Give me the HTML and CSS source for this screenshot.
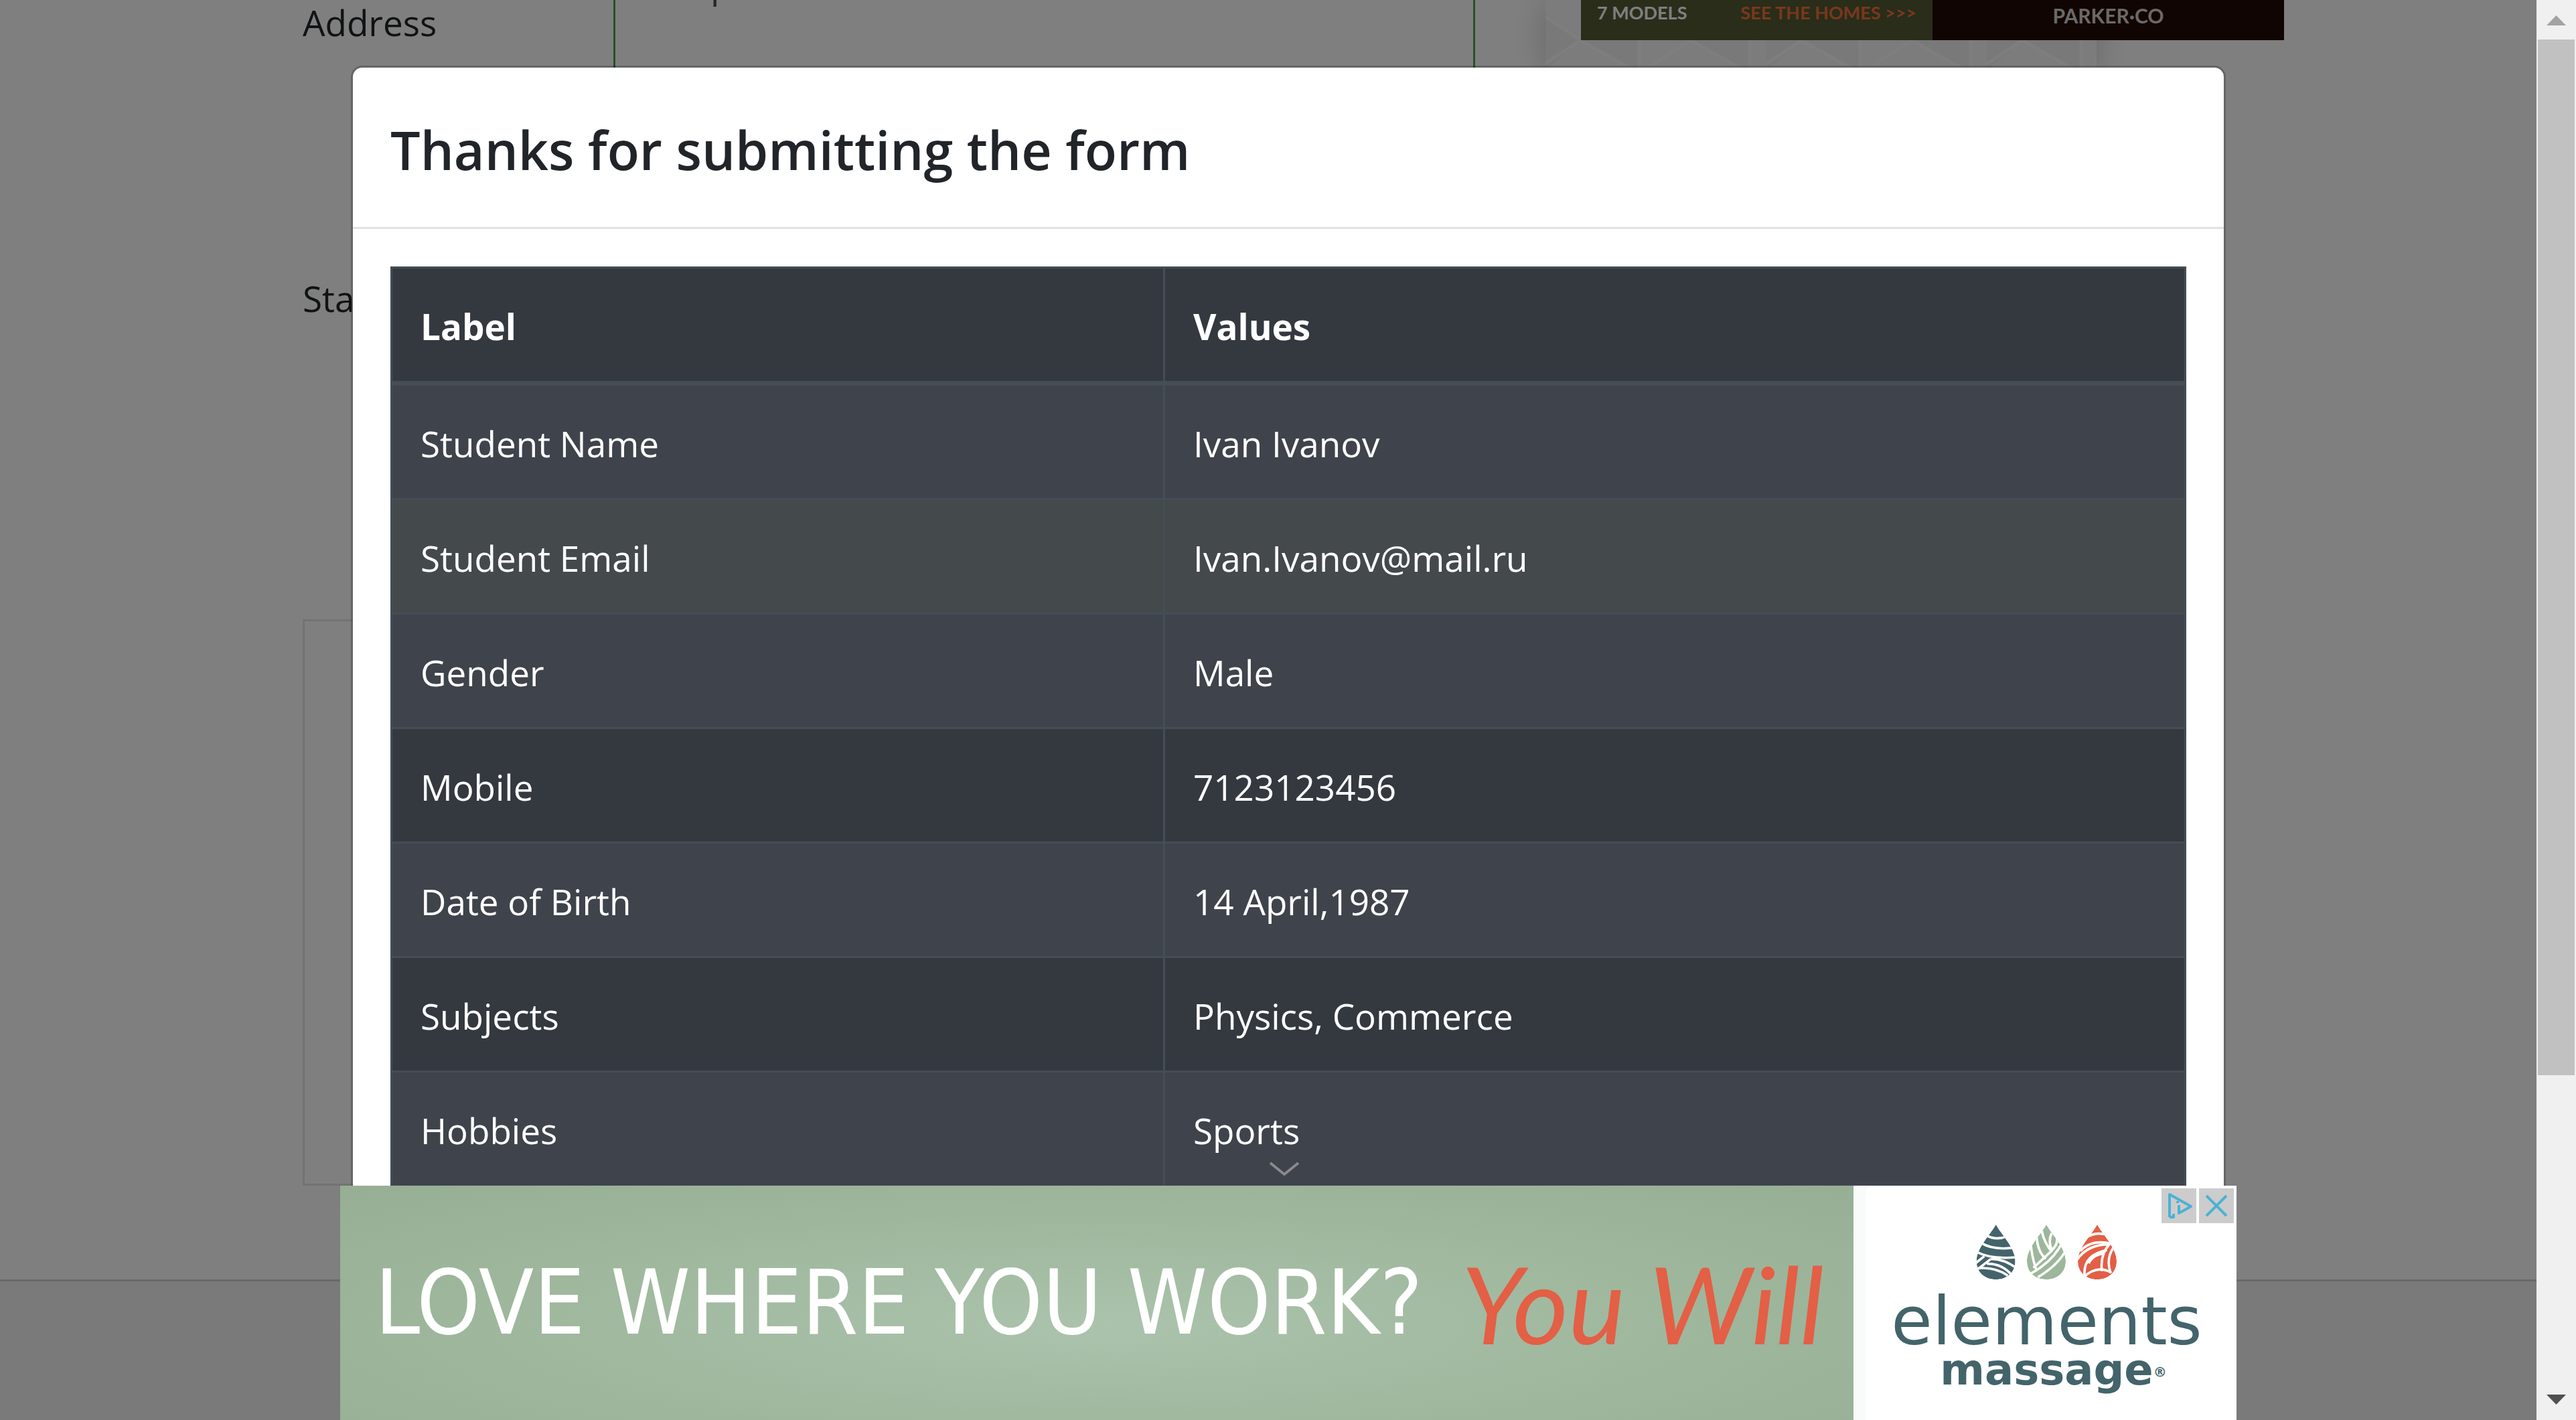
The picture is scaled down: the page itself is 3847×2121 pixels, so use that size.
FILE: index.html
```html
<!DOCTYPE html>
<html lang="en">
<head>
<meta charset="utf-8">
<title>Practice Form</title>
<link rel="stylesheet" href="styles.css">
</head>
<body>
<div class="window">
  <div class="page">
    <main class="content">
      <form class="form">
        <label class="label label-address" for="address">Address</label>
        <textarea class="address" id="address">p</textarea>
        <span class="label label-state">State</span>
        <div class="frame"></div>
      </form>
      <aside class="aside">
        <svg class="pattern" viewBox="0 0 823 110" preserveAspectRatio="none" aria-hidden="true">
          <defs>
            <pattern id="tri" width="330" height="110" patternUnits="userSpaceOnUse">
              <rect width="330" height="110" fill="#f8f8f8"/>
              <path d="M52 60H140V110L52 60ZM0 20L52 60L0 105ZM217 60H305V110L217 60Z" fill="#f2f2f2"/>
              <path d="M0 25L52 60L-15 105M52 60L140 110M217 60L140 110M217 60L305 110M140 60V110M305 60V110" fill="none" stroke="#fdfdfd" stroke-width="5"/>
            </pattern>
          </defs>
          <rect width="823" height="110" fill="url(#tri)"/>
        </svg>
        <div class="homes">
          <div class="homes-left">
            <span>7 MODELS</span>
            <a class="homes-link" href="#">SEE THE HOMES &gt;&gt;&gt;</a>
          </div>
          <div class="homes-right">PARKER·CO</div>
        </div>
      </aside>
    </main>
    <footer class="footer"></footer>
    <div class="backdrop"></div>
  </div>
  <div class="scrollbar" aria-hidden="true">
    <div class="scroll-end"><svg width="29" height="15" viewBox="0 0 29 15"><path d="M14.500 0L29 15H0Z" fill="#a3a3a3"/></svg></div>
    <div class="track"><div class="thumb"></div></div>
    <div class="scroll-end scroll-down"><svg width="29" height="15" viewBox="0 0 29 15"><path d="M0 0H29L14.500 15Z" fill="#505050"/></svg></div>
  </div>
</div>

<div class="overlay">
  <section class="modal" role="dialog" aria-labelledby="modal-title">
    <header class="modal-header"><h1 class="modal-title" id="modal-title">Thanks for submitting the form</h1></header>
    <div class="modal-body">
      <table class="table">
        <thead><tr><th>Label</th><th>Values</th></tr></thead>
        <tbody>
          <tr><td>Student Name</td><td>Ivan Ivanov</td></tr>
          <tr class="hovered"><td>Student Email</td><td>Ivan.Ivanov@mail.ru</td></tr>
          <tr><td>Gender</td><td>Male</td></tr>
          <tr><td>Mobile</td><td>7123123456</td></tr>
          <tr><td>Date of Birth</td><td>14 April,1987</td></tr>
          <tr><td>Subjects</td><td>Physics, Commerce</td></tr>
          <tr><td>Hobbies</td><td>Sports</td></tr>
        </tbody>
      </table>
    </div>
  </section>
</div>

<div class="anchor">
  <svg class="chevron" viewBox="0 0 46 22" aria-hidden="true"><path d="M2 2L23 19L44 2" fill="none" stroke="#8a8a8a" stroke-width="4"/></svg>
  <div class="banner">
    <a class="banner-link" href="#">
      <span class="slogan">LOVE WHERE YOU WORK?</span>
      <span class="script">You Will</span>
    </a>
    <div class="brand">
      <svg class="drops" viewBox="60 170 639 261" aria-hidden="true">
        <defs>
          <path id="drop" d="M0 176C20 215 87 280 87 340C87 390 50 422 0 422C-50 422 -87 390 -87 340C-87 280 -20 215 0 176Z"/>
          <clipPath id="c1"><use href="#drop" x="152"/></clipPath>
          <clipPath id="c2"><use href="#drop" x="378"/></clipPath>
          <clipPath id="c3"><use href="#drop" x="606"/></clipPath>
        </defs>
        <g fill="none" stroke="#fff" stroke-width="11">
          <g clip-path="url(#c1)">
            <use href="#drop" x="152" fill="#43646a" stroke="none"/>
            <path d="M105 222Q150 250 205 228M85 258Q140 292 230 280M60 296Q130 335 250 322M60 350L100 318M60 385L130 330M112 352Q180 350 225 405M130 330Q190 330 250 375M70 372Q150 365 205 405"/>
          </g>
          <g clip-path="url(#c2)">
            <use href="#drop" x="378" fill="#9cb79a" stroke="none"/>
            <path d="M358 205Q365 250 403 300M335 235Q340 300 375 330M308 265Q315 330 335 385M402 215Q385 250 402 290M425 240Q430 265 402 292M310 395Q410 340 450 255M340 412Q430 360 470 285M320 370L395 300"/>
          </g>
          <g clip-path="url(#c3)">
            <use href="#drop" x="606" fill="#e35f45" stroke="none"/>
            <path d="M560 232Q600 208 650 222M530 295Q580 240 670 262M515 335Q560 265 665 264M552 425Q530 315 650 290M568 350Q585 312 640 305M627 385Q618 310 660 265M665 390Q645 330 678 280M545 412Q605 355 670 392"/>
          </g>
        </g>
      </svg>
      <span class="brand-name">elements</span>
      <span class="brand-sub">massage<sup class="reg">®</sup></span>
      <div class="ad-controls">
        <button class="ad-button" type="button" aria-label="Ad information"><svg viewBox="0 0 52 52"><path d="M12 43V9L44 27L26 37V25M12 43H18V38M24 19V22" fill="none" stroke="#4db1d4" stroke-width="4" stroke-linejoin="round"/></svg></button>
        <button class="ad-button" type="button" aria-label="Close ad"><svg viewBox="0 0 52 52"><path d="M11 11L41 41M41 11L11 41" fill="none" stroke="#4db1d4" stroke-width="4"/></svg></button>
      </div>
    </div>
  </div>
</div>
</body>
</html>
```
FILE: styles.css
```css
* { box-sizing: border-box; }

body {
  margin: 0;
  position: relative;
  height: 100vh;
  overflow: hidden;
  font-family: "Open Sans", "Noto Sans", sans-serif;
  font-size: 53px;
  line-height: 84px;
  color: #212529;
}

/* page behind the dialog */
.window {
  display: grid;
  grid-template-columns: minmax(0, 1fr) 59px;
  height: 100%;
}
.page {
  position: relative;
  display: flex;
  flex-direction: column;
  overflow: hidden;
  background: #fff;
}
.content {
  display: grid;
  grid-template-columns: 1751px 1fr;
  column-gap: 105px;
  padding: 0 0 140px 452px;
}
.form {
  display: grid;
  grid-template-columns: 464px 1fr;
  grid-template-rows: 404px 521px 846px;
}
.label-address { margin-top: -8px; }
.address {
  height: 404px;
  margin-top: -90px;
  padding: 22px 42px 22px 142px;
  border: 3px solid #4fa353;
  background: none;
  font: inherit;
  color: #495057;
  resize: none;
  overflow: hidden;
}
.label-state { grid-column: 1 / -1; }
.frame {
  grid-column: 1 / -1;
  border: 3px solid #e6e6e6;
}
.aside {
  display: grid;
  align-content: start;
  justify-items: start;
}
.pattern {
  grid-area: 1 / 1;
  width: 823px;
  height: 110px;
  box-shadow: 0 0 50px rgba(0, 0, 0, .2);
}
.homes {
  grid-area: 1 / 1;
  display: flex;
  width: 1050px;
  height: 60px;
  margin-left: 53px;
  font: 700 27px/36px Lato, sans-serif;
  color: #fff;
  background: #525a34;
}
.homes-left {
  display: flex;
  justify-content: space-between;
  width: 525px;
  padding: 1px 24px;
}
.homes-link {
  color: #f07038;
  text-decoration: none;
}
.homes-right {
  width: 525px;
  padding-top: 5px;
  text-align: center;
  font-size: 30px;
  color: #d8d2cc;
  background: #200b04;
}
.footer {
  flex: 1;
  border-top: 3px solid #d0d0d0;
  background: #f5f5f5;
}
.backdrop {
  position: absolute;
  inset: 0;
  background: rgba(0, 0, 0, .5);
}

/* scrollbar */
.scrollbar {
  display: flex;
  flex-direction: column;
  background: #f0f0f0;
}
.scroll-end {
  display: flex;
  justify-content: center;
  height: 59px;
  padding-top: 23px;
}
.scroll-down { padding-top: 21px; }
.track {
  flex: 1;
  padding: 0 2px;
}
.thumb {
  height: calc(77% + 5px);
  background: #c1c1c1;
}

/* dialog */
.overlay {
  position: absolute;
  inset: 0;
  padding: 98px 0 0 1px;
  overflow: hidden;
}
.modal {
  max-width: 2800px;
  margin: 0 auto;
  border: 3px solid rgba(0, 0, 0, .2);
  border-radius: 17px;
  background: #fff;
  background-clip: padding-box;
}
.modal-header {
  padding: 60px 56px 52px;
  border-bottom: 3px solid #dee2e6;
}
.modal-title {
  margin: 0;
  font-size: 79px;
  font-weight: 600;
  line-height: 126px;
}
.modal-body { padding: 56px 56px 400px; }
.table {
  width: 100%;
  table-layout: fixed;
  border-collapse: separate;
  border-spacing: 0;
  border: solid #454d55;
  border-width: 3px 3px 0 0;
  background: #343940;
  color: #fff;
}
.table th,
.table td {
  padding: 45px 42px 39px;
  border: solid #454d55;
  border-width: 0 0 3px 3px;
  text-align: left;
}
.table th { border-bottom-width: 7px; }
.table th:first-child { width: 1154px; }
.table tbody tr:nth-child(odd) { background: #3f434b; }
.table .hovered { background: #44494b; }

/* anchored advert */
.anchor {
  position: absolute;
  inset: auto 0 0;
  display: flex;
  flex-direction: column;
  align-items: center;
  padding-left: 1px;
}
.chevron {
  width: 46px;
  height: 22px;
  margin: 0 12px 14px 0;
}
.banner {
  display: grid;
  grid-template-columns: minmax(0, 1fr) 572px;
  width: 100%;
  max-width: 2832px;
  height: 350px;
}
.banner-link {
  display: flex;
  align-items: center;
  justify-content: space-between;
  padding: 0 44px 0 52px;
  background: radial-gradient(ellipse at 50% 60%, #abc2ac, #a0b89e 50%, #96af94);
  color: #fff;
  text-decoration: none;
  white-space: nowrap;
}
.slogan { font: 134px/168px "DejaVu Sans Condensed", sans-serif; }
.script {
  font: italic 160px/168px Lato, sans-serif;
  color: #e35f45;
}
.brand {
  position: relative;
  display: flex;
  flex-direction: column;
  align-items: center;
  padding: 56px 14px 0 0;
  background: #fff;
  border-left: 19px solid #f9fafa;
  color: #43646a;
  font-family: "DejaVu Sans", sans-serif;
}
.drops {
  width: 213px;
  height: 87px;
}
.brand-name {
  margin-top: 14px;
  font-size: 100px;
  line-height: 92px;
}
.brand-sub {
  padding-left: 20px;
  font-size: 64px;
  font-weight: 700;
  line-height: 52px;
}
.reg {
  font-size: 20px;
  line-height: 0;
  vertical-align: 12px;
}
.ad-controls {
  position: absolute;
  top: 4px;
  right: 4px;
  display: flex;
  gap: 4px;
}
.ad-button {
  width: 52px;
  height: 52px;
  padding: 0;
  border: 0;
  background: #ccc;
}
.ad-button svg { display: block; }
```
